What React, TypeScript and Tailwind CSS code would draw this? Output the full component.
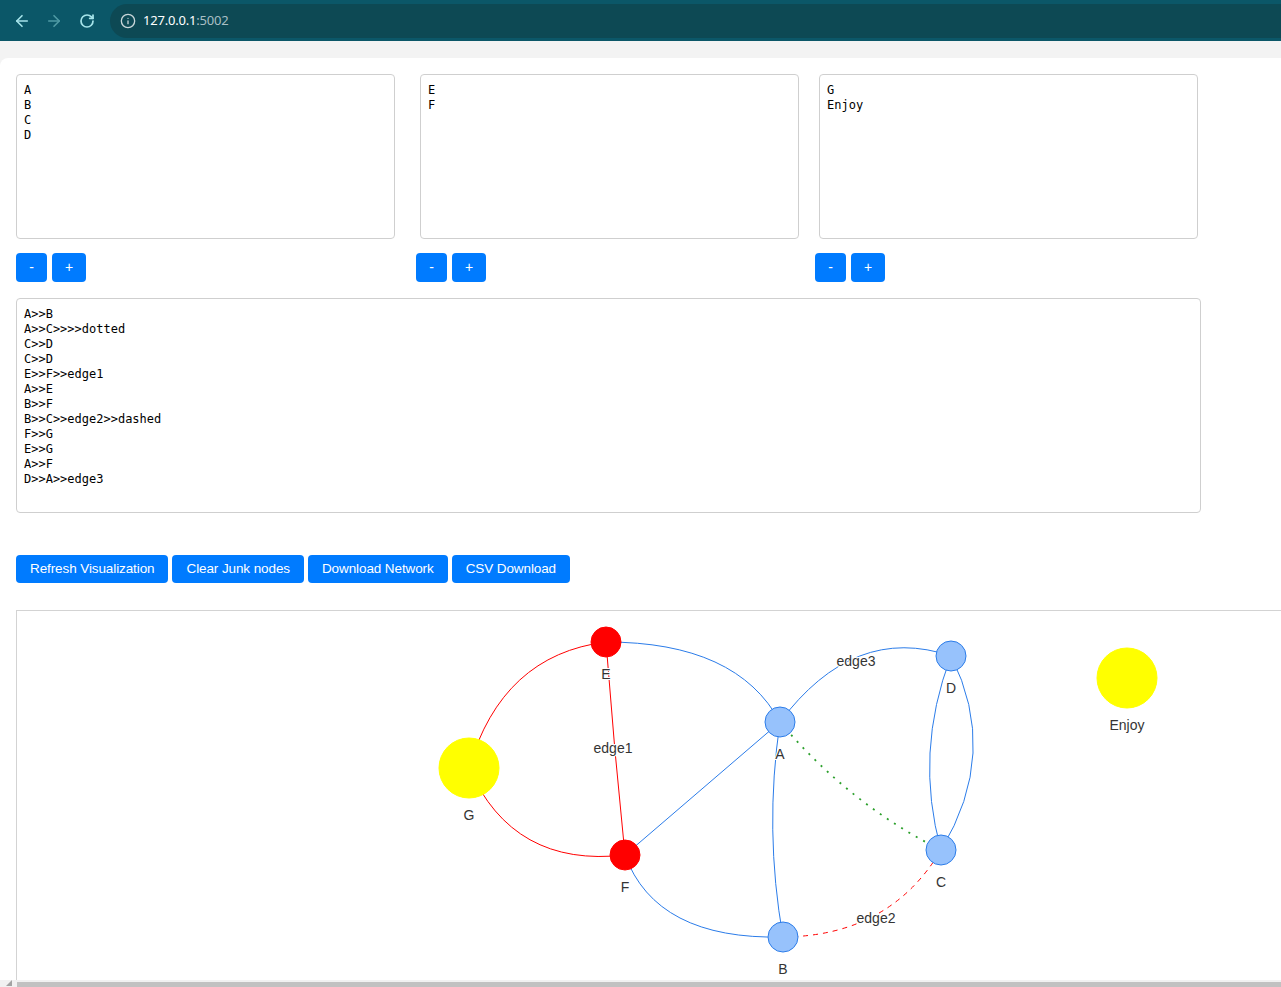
import React from "react";
import { ArrowLeft, ArrowRight, RotateCw, Info } from "lucide-react";

type Node = { id: string; x: number; y: number; r: number; fill: string; stroke: string };
type Edge = { d: string; color: string; dash?: string; w?: number; label?: { text: string; x: number; y: number } };

const nodes: Node[] = [
  { id: "E", x: 606, y: 642, r: 15, fill: "#ff0000", stroke: "#ff0000" },
  { id: "G", x: 469, y: 768, r: 30, fill: "#ffff00", stroke: "#ffff00" },
  { id: "A", x: 780, y: 722, r: 15, fill: "#97c2fc", stroke: "#2b7ce9" },
  { id: "D", x: 951, y: 656, r: 15, fill: "#97c2fc", stroke: "#2b7ce9" },
  { id: "C", x: 941, y: 850, r: 15, fill: "#97c2fc", stroke: "#2b7ce9" },
  { id: "F", x: 625, y: 855, r: 15, fill: "#ff0000", stroke: "#ff0000" },
  { id: "B", x: 783, y: 937, r: 15, fill: "#97c2fc", stroke: "#2b7ce9" },
  { id: "Enjoy", x: 1127, y: 678, r: 30, fill: "#ffff00", stroke: "#ffff00" },
];

const edges: Edge[] = [
  { d: "M606 642 Q502 655 469 768", color: "#ff0000" },
  { d: "M469 768 Q513 868 625 855", color: "#ff0000" },
  { d: "M606 642 Q614 748 625 855", color: "#ff0000", label: { text: "edge1", x: 613, y: 748 } },
  { d: "M606 642 Q737 642 780 722", color: "#2b7ce9" },
  { d: "M780 722 Q854 623 951 656", color: "#2b7ce9", label: { text: "edge3", x: 856, y: 661 } },
  { d: "M780 722 L625 855", color: "#2b7ce9" },
  { d: "M780 722 Q764 830 783 937", color: "#2b7ce9" },
  { d: "M780 722 Q849 804 941 850", color: "#2ca02c", dash: "2 6.5", w: 1.8 },
  { d: "M941 850 Q914 753 951 656", color: "#2b7ce9" },
  { d: "M941 850 Q1000 753 951 656", color: "#2b7ce9" },
  { d: "M625 855 Q656 940 783 937", color: "#2b7ce9" },
  { d: "M783 937 Q890 936 941 850", color: "#ff0000", dash: "5 5", label: { text: "edge2", x: 876, y: 918 } },
];

const mono = "font-['DejaVu_Sans_Mono',monospace] text-[12px] leading-[15px] text-black";
const boxCls =
  "block w-[379px] h-[165px] resize-none overflow-hidden rounded-[4px] border border-[#cfcfcf] bg-white px-[7px] pt-[8px] pb-[6px] outline-none " +
  mono;
const smallBtn =
  "h-[29px] rounded-[4px] bg-[#007bff] text-white text-[14px] font-['Liberation_Sans',Arial,sans-serif]";
const bigBtn =
  "h-[28px] rounded-[4px] bg-[#007bff] px-[14px] text-white text-[13.5px] tracking-[-0.1px] font-['Liberation_Sans',Arial,sans-serif]";

const edgeText = `A>>B
A>>C>>>>dotted
C>>D
C>>D
E>>F>>edge1
A>>E
B>>F
B>>C>>edge2>>dashed
F>>G
E>>G
A>>F
D>>A>>edge3`;

function PlusMinus() {
  return (
    <div className="mt-[14px] flex gap-[5px]">
      <button className={smallBtn + " w-[31px]"}>-</button>
      <button className={smallBtn + " w-[34px]"}>+</button>
    </div>
  );
}

function Graph() {
  return (
    <svg width="1300" height="400" className="block">
      <g transform="translate(-17,-611)">
        {edges.map((e, i) => (
          <path key={i} d={e.d} fill="none" stroke={e.color} strokeWidth={e.w ?? 1} strokeDasharray={e.dash} />
        ))}
        {edges
          .filter((e) => e.label)
          .map((e, i) => (
            <text
              key={"l" + i}
              x={e.label!.x}
              y={e.label!.y}
              textAnchor="middle"
              dominantBaseline="central"
              fill="#343434"
              stroke="#ffffff"
              strokeWidth={2}
              paintOrder="stroke"
              fontSize={14}
              fontFamily="'Liberation Sans', Arial, sans-serif"
            >
              {e.label!.text}
            </text>
          ))}
        {nodes.map((n) => (
          <g key={n.id}>
            <circle cx={n.x} cy={n.y} r={n.r} fill={n.fill} stroke={n.stroke} strokeWidth={1} />
            <text
              x={n.x}
              y={n.y + n.r + 17}
              textAnchor="middle"
              dominantBaseline="central"
              fill="#343434"
              stroke="#ffffff"
              strokeWidth={2}
              paintOrder="stroke"
              fontSize={14}
              fontFamily="'Liberation Sans', Arial, sans-serif"
            >
              {n.id}
            </text>
          </g>
        ))}
      </g>
    </svg>
  );
}

export default function App() {
  return (
    <div className="h-[987px] w-[1281px] overflow-hidden bg-[#f3f3f3]">
      {/* browser bar */}
      <div className="flex h-[41px] items-center bg-[#0b5768] pl-[13px]">
        <ArrowLeft className="h-[18px] w-[18px] text-[#a6e4ea]" strokeWidth={2.2} />
        <ArrowRight className="ml-[14px] h-[18px] w-[18px] text-[#4f9aa4]" strokeWidth={2.2} />
        <RotateCw className="ml-[16px] h-[16px] w-[16px] text-[#a6e4ea]" strokeWidth={2.6} />
        <div className="ml-[15px] flex h-[34px] flex-1 items-center rounded-l-full bg-[#0d4954] pl-[10px]">
          <Info className="h-[16px] w-[16px] text-[#c9d6d9]" strokeWidth={2} />
          <span className="ml-[7px] font-['Noto_Sans',sans-serif] text-[13px] tracking-[-0.2px] text-white">
            127.0.0.1<span className="text-[#a9bfc4]">:5002</span>
          </span>
        </div>
      </div>
      <div className="h-[17px] bg-[#f3f3f3]" />

      {/* page */}
      <div className="h-[922px] overflow-hidden rounded-tl-[8px] bg-white pl-[16px] pt-[16px]">
        <div className="grid grid-cols-[400px_399px_400px]">
          <div>
            <textarea className={boxCls} readOnly defaultValue={"A\nB\nC\nD"} />
            <PlusMinus />
          </div>
          <div>
            <textarea className={boxCls + " ml-[4px]"} readOnly defaultValue={"E\nF"} />
            <PlusMinus />
          </div>
          <div>
            <textarea className={boxCls + " ml-[4px]"} readOnly defaultValue={"G\nEnjoy"} />
            <PlusMinus />
          </div>
        </div>

        <textarea
          className={
            "mt-[16px] block h-[215px] w-[1185px] resize-none overflow-hidden rounded-[4px] border border-[#cfcfcf] bg-white px-[7px] pt-[8px] pb-[6px] outline-none " +
            mono
          }
          readOnly
          defaultValue={edgeText}
        />

        <div className="mt-[42px] flex gap-[4px]">
          <button className={bigBtn}>Refresh Visualization</button>
          <button className={bigBtn}>Clear Junk nodes</button>
          <button className={bigBtn}>Download Network</button>
          <button className={bigBtn}>CSV Download</button>
        </div>

        <div className="mt-[27px] h-[400px] w-[1300px] border border-[#d3d3d3] bg-white">
          <Graph />
        </div>
      </div>

      {/* horizontal scrollbar */}
      <div className="flex h-[7px] bg-[#f1f1f1]">
        <div className="flex w-[17px] items-end justify-center pb-[1px]">
          <div className="h-0 w-0 border-l-[3px] border-t-[3px] border-l-transparent border-t-transparent border-r-[3px] border-b-[3px] border-r-[#a3a3a3] border-b-[#a3a3a3]" />
        </div>
        <div className="mt-[2px] flex-1 bg-[#c1c1c1]" />
      </div>
    </div>
  );
}
